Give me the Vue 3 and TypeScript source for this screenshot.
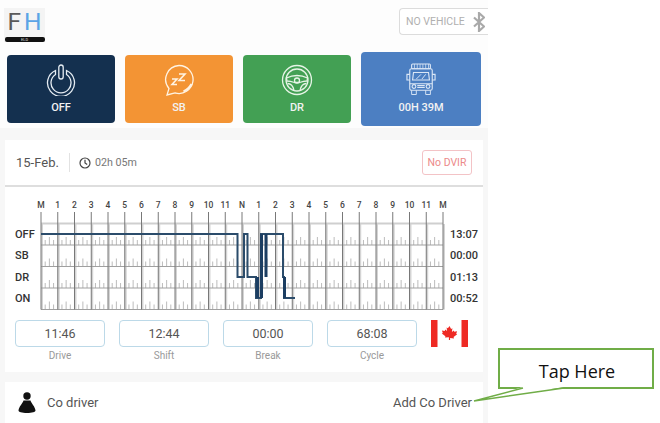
<script setup lang="ts">
const hours = ['M', '1', '2', '3', '4', '5', '6', '7', '8', '9', '10', '11', 'N', '1', '2', '3', '4', '5', '6', '7', '8', '9', '10', '11', 'M']
const hourStep = 16.75
const left = 41
const hourLines = hours.map((label, i) => ({ label, x: left + i * hourStep }))

const rowTops = [223.5, 245, 266.5, 288]
const ticks: { x: number; y: number; h: number }[] = []
for (const top of rowTops) {
  for (let i = 0; i < 96; i++) {
    if (i % 4 === 0) continue
    ticks.push({ x: left + (i * hourStep) / 4, y: top + 21.5, h: i % 2 === 0 ? -8 : -5 })
  }
}

const trace = 'M41 234H237.5V277H244V234H247.5V277H256V298H261V234H283V277H284V298H295'

const stats = [
  { value: '11:46', label: 'Drive' },
  { value: '12:44', label: 'Shift' },
  { value: '00:00', label: 'Break' },
  { value: '68:08', label: 'Cycle' },
]
const totals = ['13:07', '00:00', '01:13', '00:52']
const statuses = ['OFF', 'SB', 'DR', 'ON']
</script>

<template>
  <div class="page">
    <div class="app">
      <header class="top">
        <div class="logo">
          <div class="logo-letters"><span class="f">F</span><span class="h">H</span></div>
          <div class="logo-bar">ELD</div>
        </div>
        <div class="vehicle">
          <span>NO VEHICLE</span>
          <svg width="12" height="20" viewBox="0 0 12 20" fill="none" stroke="#a9a9a9" stroke-width="2.2">
            <path d="M1 5.5l10 9-5 4.500V1l5 4.500-10 9" />
          </svg>
        </div>
      </header>

      <div class="modes">
        <div class="mode off">
          <svg width="32" height="32" viewBox="0 0 32 32" fill="none" stroke="#e6edf3" stroke-width="1.3">
            <path d="M10.5 6.5a13.5 13.5 0 1 0 11 0v4a10 10 0 1 1-11 0z" />
            <rect x="13.8" y="1" width="4.4" height="14" rx="2.2" />
          </svg>
          <span>OFF</span>
        </div>
        <div class="mode sb">
          <svg width="32" height="32" viewBox="0 0 32 32" fill="none" stroke="#fff3e2" stroke-width="1.3">
            <path d="M16 1.5a14 14 0 1 1-4 27.4L4 31l2-6.500A14 14 0 0 1 16 1.500z" />
            <path d="M9 15h5l-5 5.500h5M16 10h6l-6 6.500h6" stroke-width="1.6" />
            <path d="M28.500 20c-2 3.500-4.500 6-8 7.500" stroke-width="2.2" />
          </svg>
          <span>SB</span>
        </div>
        <div class="mode dr">
          <svg width="32" height="32" viewBox="0 0 32 32" fill="none" stroke="#e6f4e6" stroke-width="1.3">
            <circle cx="16" cy="16" r="14.5" />
            <circle cx="16" cy="16" r="11" />
            <circle cx="16" cy="16.5" r="2.5" />
            <path d="M5.500 14c3-1.500 7-2.500 10.500-2.500S23.500 12.500 26.500 14l-.5 3c-3 0-6 1-7.500 1.500h-5C12 18 9 17 6 17zM6.500 19.500c3 0 5.500 2 6.500 7M25.500 19.500c-3 0-5.500 2-6.500 7" />
          </svg>
          <span>DR</span>
        </div>
        <div class="mode timer">
          <svg width="30" height="33" viewBox="0 0 32 35" fill="none" stroke="#dbe7f6" stroke-width="1.2">
            <rect x="6" y="1" width="20" height="5" rx="1" />
            <path d="M9 1v5M12 1v5M15 1v5M18 1v5M21 1v5M24 1v5" stroke-width=".8" />
            <rect x="4" y="6" width="24" height="23" rx="2" />
            <path d="M8 10h16l1 8H7zM4 12H1v6h3M28 12h3v6h-3M4 22h24M12 26h8M12 24h8" />
            <circle cx="8.500" cy="25" r="2" />
            <circle cx="23.500" cy="25" r="2" />
            <path d="M6 29v4.500h5V29M21 29v4.500h5V29M16 12l-5 5M21 12l-4 5" stroke-width="1" />
          </svg>
          <span>00H 39M</span>
        </div>
      </div>

      <section class="log">
        <div class="log-head">
          <span class="date">15-Feb.</span>
          <span class="sep"></span>
          <svg width="12" height="12" viewBox="0 0 12 12" fill="none" stroke="#444" stroke-width="1.2">
            <circle cx="6" cy="6" r="5" />
            <path d="M6 2.800V6l2.200 1.600" />
          </svg>
          <span class="dur">02h 05m</span>
          <span class="dvir">No DVIR</span>
        </div>

        <div class="chart">
          <div class="statuses">
            <span v-for="s in statuses" :key="s">{{ s }}</span>
          </div>
          <svg class="grid" width="488" height="130" viewBox="0 187 488 130">
            <text
              v-for="(h, i) in hourLines"
              :key="'l' + i"
              :x="h.x"
              y="208"
              text-anchor="middle"
              class="hour"
            >{{ h.label }}</text>
            <g stroke="#d4d4d4" stroke-width="2">
              <line
                v-for="(h, i) in hourLines"
                :key="'g' + i"
                :x1="h.x + 1"
                y1="224"
                :x2="h.x + 1"
                y2="309.5"
              />
            </g>
            <line x1="41" y1="223.5" x2="443" y2="223.5" stroke="#cfcfcf" stroke-width="2" />
            <g stroke="#bcbcbc" stroke-width="1">
              <line v-for="(t, i) in ticks" :key="'t' + i" :x1="t.x" :y1="t.y" :x2="t.x" :y2="t.y + t.h" />
            </g>
            <g stroke="#a0a0a0" stroke-width="1">
              <line x1="41" y1="245" x2="443" y2="245" />
              <line x1="41" y1="266.5" x2="443" y2="266.5" />
              <line x1="41" y1="288" x2="443" y2="288" />
              <line x1="41" y1="309.5" x2="443" y2="309.5" />
            </g>
            <g stroke="#787878" stroke-width="1">
              <line
                v-for="(h, i) in hourLines"
                :key="'v' + i"
                :x1="h.x"
                y1="212"
                :x2="h.x"
                y2="309.5"
              />
            </g>
            <path :d="trace" fill="none" stroke="#2b4c6b" stroke-width="2" />
            <path d="M257.5 277V298M261.5 234V298M266 234V277M284.5 277V298" fill="none" stroke="#1c3e62" stroke-width="3" />
          </svg>
          <div class="totals">
            <span v-for="(t, i) in totals" :key="i">{{ t }}</span>
          </div>
        </div>

        <div class="stats">
          <div v-for="s in stats" :key="s.label" class="stat">
            <div class="stat-box">{{ s.value }}</div>
            <div class="stat-label">{{ s.label }}</div>
          </div>
          <svg class="flag" width="37" height="27" viewBox="0 0 37 27">
            <rect width="37" height="27" fill="#fff" />
            <rect width="6.5" height="27" fill="#ee2a24" />
            <rect x="30.5" width="6.5" height="27" fill="#ee2a24" />
            <path d="M18.500 6l1.600 3 1.300-.7-.5 3.600 1.900-1.500.5 1.300 2.800-.4-.9 2.500 1 .5-3.600 2.800.4 1.300-3.900-.4V20h-1.200v-2.800l-3.900.4.400-1.300-3.600-2.800 1-.5-.9-2.500 2.800.4.500-1.300 1.900 1.500-.5-3.600 1.300.7z" fill="#ee2a24" />
          </svg>
        </div>
      </section>

      <section class="co">
        <svg width="18" height="21" viewBox="0 0 18 21" fill="#111">
          <circle cx="9" cy="4" r="3.7" />
          <path d="M5.500 8.500h7c1 3 4.500 6 5 10 .1 1.500-3.500 2.500-8.500 2.500S.4 20 .5 18.500c.5-4 4-7 5-10z" />
        </svg>
        <span class="co-label">Co driver</span>
        <span class="co-add">Add Co Driver</span>
      </section>
    </div>

    <div class="callout">
      <svg class="callout-tail" width="100" height="20" viewBox="0 0 100 20">
        <path d="M1 14L50 0H91z" fill="#fff" />
        <path d="M1 14L50 1M91 1L1 14" fill="none" stroke="#70ad47" stroke-width="1.5" />
      </svg>
      Tap Here
    </div>
  </div>
</template>

<style>
html,
body {
  margin: 0;
  background: #fff;
}
</style>

<style scoped>
.page {
  position: relative;
  width: 660px;
  height: 423px;
  overflow: hidden;
  font-family: Roboto, 'Liberation Sans', sans-serif;
  color: #444;
}

.app {
  width: 488px;
  height: 423px;
  background: #f7f7f7;
  display: flex;
  flex-direction: column;
  align-items: center;
  overflow: hidden;
}

.top {
  align-self: stretch;
  height: 50px;
  box-sizing: border-box;
  padding: 8px 0 0 4px;
  background: #fdfdfd;
  display: flex;
  justify-content: space-between;
  align-items: flex-start;
}

.logo {
  width: 41px;
  height: 34px;
  background: #f4f4f4;
  display: flex;
  flex-direction: column;
  align-items: center;
}

.logo-letters {
  font-size: 24.5px;
  font-weight: 400;
  line-height: 26px;
  height: 26px;
  letter-spacing: 3px;
  margin-top: 1px;
  padding-left: 3px;
}

.logo-letters .f {
  color: #5a5a5a;
}

.logo-letters .h {
  color: #5ba4e6;
}

.logo-bar {
  width: 40px;
  height: 5px;
  margin-top: 2px;
  border-radius: 2px;
  background: #111;
  color: #ddd;
  font-size: 4px;
  line-height: 5px;
  text-align: center;
}

.vehicle {
  width: 89px;
  height: 27px;
  box-sizing: border-box;
  border: 1px solid #dcdcdc;
  border-right: 0;
  border-radius: 4px 0 0 4px;
  background: #fff;
  display: flex;
  align-items: center;
  gap: 8px;
  padding-left: 6px;
  color: #b0b0b0;
  font-size: 10.5px;
  white-space: nowrap;
}

.modes {
  align-self: stretch;
  height: 78px;
  box-sizing: border-box;
  padding: 0 7px;
  background: #fdfdfd;
  display: flex;
  gap: 10px;
  align-items: center;
}

.mode {
  width: 108px;
  height: 68px;
  border-radius: 4px;
  box-sizing: border-box;
  padding-top: 9px;
  color: #f2f2f2;
  font-size: 11px;
  font-weight: 500;
  display: flex;
  flex-direction: column;
  align-items: center;
  gap: 5px;
}

.off {
  background: #14304f;
}

.sb {
  background: #f39434;
}

.dr {
  background: #43a054;
}

.timer {
  width: 120px;
  height: 74px;
  padding-top: 11px;
  background: #4c7fc2;
  gap: 5px;
}

.log {
  width: 478px;
  height: 232px;
  margin-top: 12px;
  background: #fff;
  flex: none;
}

.log-head {
  height: 47px;
  box-sizing: border-box;
  padding: 0 11px;
  border-bottom: 2px solid #dedede;
  display: flex;
  align-items: center;
  color: #555;
}

.date {
  font-size: 13px;
}

.sep {
  width: 1px;
  height: 19px;
  margin: 0 9px 0 10px;
  background: #e2e2e2;
}

.dur {
  margin-left: 4px;
  font-size: 10.7px;
  color: #777;
}

.dvir {
  margin-left: auto;
  width: 50px;
  height: 25px;
  box-sizing: border-box;
  border: 1px solid #f3c3c6;
  border-radius: 3px;
  color: #ec8a8a;
  font-size: 10.5px;
  line-height: 23px;
  text-align: center;
}

.chart {
  position: relative;
  height: 130px;
  margin-left: -5px;
}

.grid {
  display: block;
}

.hour {
  font-family: Roboto, 'Liberation Sans', sans-serif;
  font-size: 8.5px;
  font-weight: 500;
  fill: #444;
}

.statuses,
.totals {
  position: absolute;
  top: 37px;
  display: flex;
  flex-direction: column;
  font-size: 11px;
  font-weight: 500;
  color: #333;
}

.statuses span,
.totals span {
  height: 21.4px;
  line-height: 21.4px;
}

.statuses {
  left: 15px;
}

.totals {
  left: 450px;
}

.stats {
  display: flex;
  gap: 14px;
  padding: 3px 0 0 10px;
  align-items: flex-start;
}

.stat {
  width: 90px;
  text-align: center;
}

.stat-box {
  height: 27px;
  box-sizing: border-box;
  border: 1px solid #bcd9e8;
  border-radius: 4px;
  font-size: 12.5px;
  line-height: 25px;
  color: #555;
}

.stat-label {
  margin-top: 3px;
  font-size: 10px;
  line-height: 12px;
  color: #999;
}

.flag {
  flex: none;
}

.co {
  width: 478px;
  height: 41px;
  margin-top: 10px;
  flex: none;
  box-sizing: border-box;
  padding: 0 11px 0 13px;
  background: #fff;
  display: flex;
  align-items: center;
  font-size: 13px;
  color: #555;
}

.co-label {
  margin-left: 11px;
}

.co-add {
  margin-left: auto;
}

.callout {
  position: absolute;
  left: 498px;
  top: 348px;
  width: 156px;
  height: 41px;
  box-sizing: border-box;
  border: 2px solid #70ad47;
  background: #fff;
  font-family: 'Open Sans', 'Liberation Sans', sans-serif;
  font-size: 18px;
  line-height: 43px;
  text-align: center;
  color: #111;
  padding-left: 2px;
}

.callout-tail {
  position: absolute;
  left: -27px;
  top: 37px;
  overflow: visible;
}
</style>
